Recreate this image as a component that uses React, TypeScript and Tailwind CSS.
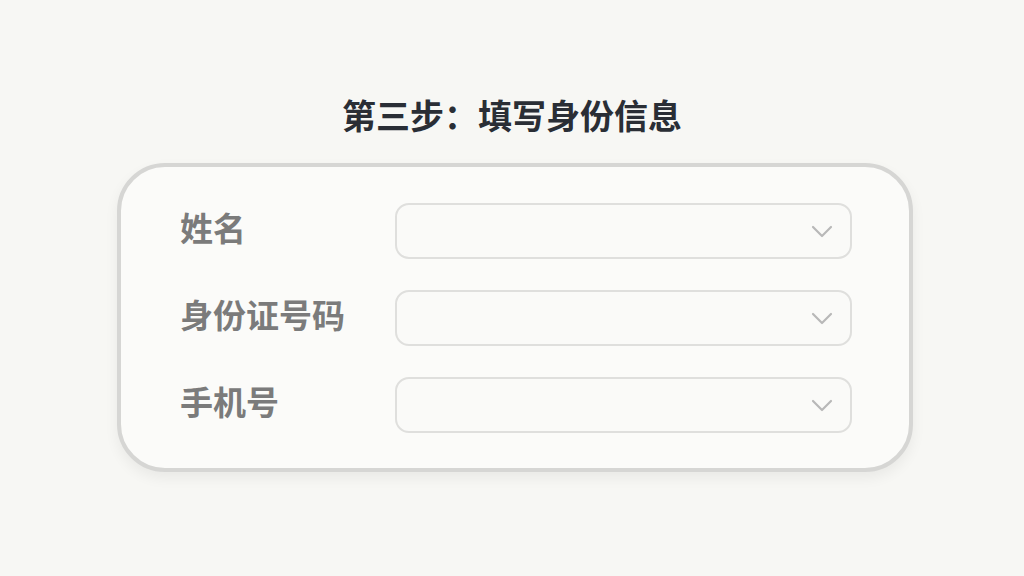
import React from 'react';

const fields = ['姓名', '身份证号码', '手机号'];

const Chevron: React.FC = () => (
  <svg width="22" height="13" viewBox="0 0 22 13" fill="none">
    <polyline points="2,2 11,11 20,2" stroke="#b8b8b8" strokeWidth="2.2" strokeLinecap="round" strokeLinejoin="round" />
  </svg>
);

export default function App() {
  return (
    <div
      className="w-[1024px] h-[576px] bg-[#f7f7f4] flex flex-col items-center overflow-hidden"
      style={{ fontFamily: '"Noto Sans CJK SC", "Noto Sans", sans-serif' }}
    >
      <h1 className="pt-[92px] text-[34px] leading-[46px] font-bold text-[#2a2e35]">
        第三步：填写身份信息
      </h1>
      <div className="mt-[25px] ml-[6px] w-[796px] rounded-[48px] border-[4px] border-[#d6d6d4] bg-[#fbfbf9] shadow-[0_6px_14px_rgba(0,0,0,0.06)] pl-[59px] pr-[57px] pt-[36px] pb-[35px] flex flex-col gap-[31px]">
        {fields.map(f => (
          <div key={f} className="flex items-center">
            <span className="w-[215px] mb-[8px] text-[33px] leading-[40px] font-bold text-[#7b7b7b]">{f}</span>
            <div className="flex-1 h-[56px] rounded-[14px] border-2 border-[#dfdfdd] bg-[#fafaf8] flex items-center justify-end pr-[17px]">
              <Chevron />
            </div>
          </div>
        ))}
      </div>
    </div>
  );
}
